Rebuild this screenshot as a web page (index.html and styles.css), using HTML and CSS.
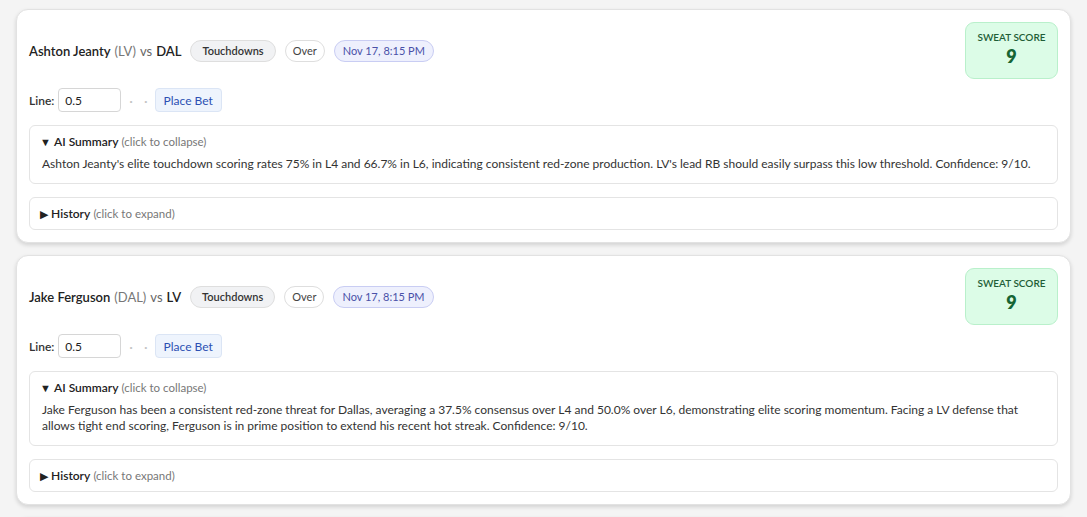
FILE: index.html
```html
<!DOCTYPE html>
<html>
<head>
<meta charset="UTF-8">
<meta name="viewport" content="width=device-width, initial-scale=1.0">
<title>Sweat Board</title>
<link rel="stylesheet" href="styles.css">
</head>
<body>
<div class="lista">
	<div class="kartu">
		<div class="atas">
			<div class="judul">
				<span class="nama">Ashton Jeanty</span>
				<span class="tim">(LV)</span>
				<span class="vs">vs</span>
				<span class="lawan">DAL</span>
				<span class="pil pil-abu">Touchdowns</span>
				<span class="pil pil-putih">Over</span>
				<span class="pil pil-ungu">Nov 17, 8:15 PM</span>
			</div>
			<div class="skor">
				<div class="skor-label">SWEAT SCORE</div>
				<div class="skor-angka">9</div>
			</div>
		</div>
		<div class="baris">
			<label>Line:</label>
			<input class="isian" type="text" value="0.5">
			<span class="titik">&middot;</span><span class="titik">&middot;</span>
			<button class="tombol">Place Bet</button>
		</div>
		<details class="kotak" open>
			<summary><span class="panah">&#9660;</span> <b>AI Summary</b> <span class="redup">(click to collapse)</span></summary>
			<p>Ashton Jeanty's elite touchdown scoring rates 75% in L4 and 66.7% in L6, indicating consistent red-zone production. LV's lead RB should easily surpass this low threshold. Confidence: 9/10.</p>
		</details>
		<details class="kotak">
			<summary><span class="panah">&#9654;</span> <b>History</b> <span class="redup">(click to expand)</span></summary>
		</details>
	</div>

	<div class="kartu">
		<div class="atas">
			<div class="judul">
				<span class="nama">Jake Ferguson</span>
				<span class="tim">(DAL)</span>
				<span class="vs">vs</span>
				<span class="lawan">LV</span>
				<span class="pil pil-abu">Touchdowns</span>
				<span class="pil pil-putih">Over</span>
				<span class="pil pil-ungu">Nov 17, 8:15 PM</span>
			</div>
			<div class="skor">
				<div class="skor-label">SWEAT SCORE</div>
				<div class="skor-angka">9</div>
			</div>
		</div>
		<div class="baris">
			<label>Line:</label>
			<input class="isian" type="text" value="0.5">
			<span class="titik">&middot;</span><span class="titik">&middot;</span>
			<button class="tombol">Place Bet</button>
		</div>
		<details class="kotak" open>
			<summary><span class="panah">&#9660;</span> <b>AI Summary</b> <span class="redup">(click to collapse)</span></summary>
			<p>Jake Ferguson has been a consistent red-zone threat for Dallas, averaging a 37.5% consensus over L4 and 50.0% over L6, demonstrating elite scoring momentum. Facing a LV defense that allows tight end scoring, Ferguson is in prime position to extend his recent hot streak. Confidence: 9/10.</p>
		</details>
		<details class="kotak">
			<summary><span class="panah">&#9654;</span> <b>History</b> <span class="redup">(click to expand)</span></summary>
		</details>
	</div>

	<div class="kartu"></div>
</div>
</body>
</html>
```

FILE: styles.css
```css
body {
	margin: 0;
	background-color: #f4f4f4;
	font-family: "Segoe UI", Lato, "Noto Sans", sans-serif;
	font-size: 12px;
	color: #222;
}
.lista {
	display: flex;
	flex-direction: column;
	gap: 12px;
	padding: 9px 16px;
}
.kartu {
	background-color: #fff;
	border: 1px solid #e2e2e2;
	border-radius: 12px;
	box-shadow: 0 2px 4px rgba(0,0,0,0.14);
	padding: 12px;
	display: flex;
	flex-direction: column;
	gap: 13px;
	min-height: 20px;
}
.atas {
	display: flex;
	align-items: center;
	justify-content: space-between;
	margin-bottom: -4px;
}
.judul {
	display: flex;
	align-items: center;
	font-size: 13px;
}
.nama {
	font-weight: 600;
	color: #222;
}
.tim {
	color: #777;
	margin-left: 4px;
}
.vs {
	color: #666;
	margin-left: 4px;
}
.lawan {
	font-weight: 600;
	margin-left: 4px;
}
.pil {
	display: inline-block;
	font-size: 11px;
	line-height: 20px;
	padding: 0 10px;
	border-radius: 11px;
	border: 1px solid #dedede;
	margin-left: 9px;
}
.pil-abu {
	background-color: #f1f2f4;
	font-weight: 600;
	color: #333;
	padding: 0 11px;
}
.pil-putih {
	background-color: #fff;
	color: #444;
	padding: 0 7px;
}
.pil-ungu {
	background-color: #eef0fd;
	border-color: #c9cdf3;
	color: #4a50a8;
	padding: 0 8px;
}
.skor {
	width: 91px;
	height: 55px;
	background-color: #dcfce7;
	border: 1px solid #b9f0cb;
	border-radius: 9px;
	text-align: center;
	display: flex;
	flex-direction: column;
	justify-content: center;
}
.skor-label {
	font-size: 10px;
	font-weight: 600;
	color: #1f5e37;
	line-height: 13px;
	margin-top: -3px;
}
.skor-angka {
	font-size: 18px;
	font-weight: 800;
	color: #166534;
	line-height: 24px;
}
.baris {
	display: flex;
	align-items: center;
	height: 24px;
}
.baris label {
	font-weight: 600;
	color: #333;
	margin-right: 4px;
}
.isian {
	width: 49px;
	height: 22px;
	padding: 0 6px;
	border: 1px solid #d6d6d6;
	border-radius: 4px;
	font-family: inherit;
	font-size: 12px;
	color: #222;
}
.titik {
	color: #c4c4c4;
	font-size: 14px;
	margin-left: 8px;
	margin-right: 3px;
}
.tombol {
	margin-left: 4px;
	height: 24px;
	padding: 0 8px;
	background-color: #eef4fd;
	border: 1px solid #dbe5f5;
	border-radius: 4px;
	color: #2c50b3;
	font-family: inherit;
	font-size: 12px;
}
.kotak {
	border: 1px solid #e4e4e4;
	border-radius: 6px;
	padding: 8px 12px 7px 12px;
	line-height: 16px;
}
.kotak[open] {
	padding-bottom: 11px;
}
.kotak summary {
	list-style: none;
	line-height: 16px;
	height: 16px;
	margin-left: -2px;
	cursor: pointer;
}
.kotak summary::-webkit-details-marker {
	display: none;
}
.kotak summary b {
	font-weight: 600;
	color: #222;
}
.panah {
	font-size: 11px;
	color: #222;
}
.redup {
	color: #777;
	font-size: 11.5px;
}
.kotak p {
	margin: 6px 0 0 0;
	line-height: 16px;
	color: #333;
}
```
